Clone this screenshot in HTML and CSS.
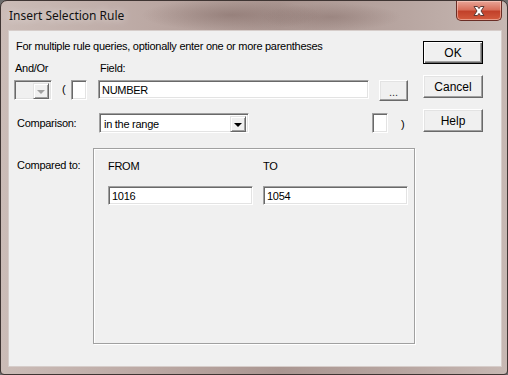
FILE: index.html
```html
<!DOCTYPE html>
<html lang="en">
<head>
  <meta charset="UTF-8">
  <title>Insert Selection Rule</title>
  <link rel="stylesheet" href="styles.css">
</head>
<body>
  <div class="window">
    <div class="titlebar">
      <span class="title">Insert Selection Rule</span>
      <div class="close-btn">
        <svg width="16" height="12" viewBox="0 0 16 12">
          <path d="M3 1.5 L6.5 1.5 L8 3.6 L9.5 1.5 L13 1.5 L10 6 L13 10.5 L9.5 10.5 L8 8.4 L6.5 10.5 L3 10.5 L6 6 Z" fill="#fff" stroke="#5b3b36" stroke-width="1" stroke-linejoin="round"/>
        </svg>
      </div>
    </div>

    <div class="client">
      <div class="main">
        <p class="hint">For multiple rule queries, optionally enter one or more parentheses</p>

        <div class="label-row">
          <span class="andor-label">And/Or</span>
          <span>Field:</span>
        </div>

        <div class="control-row">
          <div class="combo combo-small disabled">
            <span class="combo-text"></span>
            <span class="drop-btn"><i class="arrow"></i></span>
          </div>
          <span class="paren-open">(</span>
          <div class="field paren-box"></div>
          <div class="field field-name">NUMBER</div>
          <button class="btn btn-dots">...</button>
        </div>

        <div class="compare-row">
          <span class="row-label">Comparison:</span>
          <div class="combo combo-compare">
            <span class="combo-text">in the range</span>
            <span class="drop-btn"><i class="arrow"></i></span>
          </div>
          <div class="field paren-box close-box"></div>
          <span class="paren-close">)</span>
        </div>

        <div class="value-row">
          <span class="row-label">Compared to:</span>
          <div class="group">
            <div class="range-col">
              <span>FROM</span>
              <div class="field field-value">1016</div>
            </div>
            <div class="range-col">
              <span>TO</span>
              <div class="field field-value">1054</div>
            </div>
          </div>
        </div>
      </div>

      <div class="side">
        <button class="btn btn-side btn-default">OK</button>
        <button class="btn btn-side">Cancel</button>
        <button class="btn btn-side">Help</button>
      </div>
    </div>
  </div>
</body>
</html>
```

FILE: styles.css
```css
:root {
  --face: #f0f0f0;
  --shadow: #a0a0a0;
  --dark: #696969;
  --light: #e3e3e3;
}

* {
  margin: 0;
  padding: 0;
  box-sizing: border-box;
}

body {
  width: 508px;
  height: 375px;
  overflow: hidden;
  background: #6b6b6b;
  font-family: "Liberation Sans", Arial, sans-serif;
  font-size: 11px;
  letter-spacing: -0.27px;
  color: #000;
}

.window {
  width: 508px;
  height: 375px;
  border: 1px solid #3f3533;
  border-radius: 7px 7px 4px 4px;
  background:
    radial-gradient(ellipse 90px 16px at 230px 14px, rgba(120, 95, 90, 0.45), transparent),
    radial-gradient(ellipse 70px 14px at 330px 16px, rgba(125, 100, 95, 0.4), transparent),
    linear-gradient(90deg, #cbbcb7 0%, #bba8a3 30%, #aa9691 55%, #b8a6a1 80%, #c7b8b3 100%);
  display: flex;
  flex-direction: column;
}

.titlebar {
  height: 29px;
  display: flex;
  align-items: flex-start;
}

.title {
  font-family: "Noto Sans", sans-serif;
  font-size: 12px;
  letter-spacing: 0;
  padding: 6px 0 0 8px;
  color: #111;
  text-shadow: 0 0 8px rgba(255, 255, 255, 0.8);
}

.close-btn {
  margin-left: auto;
  margin-right: 5px;
  width: 46px;
  height: 20px;
  border: 1px solid #6a2d25;
  border-top: none;
  border-radius: 0 0 5px 5px;
  background: linear-gradient(180deg, #e8a597 0%, #d8705c 45%, #c2412a 55%, #d35b3e 100%);
  box-shadow: inset 0 0 0 1px rgba(255, 220, 210, 0.5);
  display: flex;
  align-items: center;
  justify-content: center;
}

.client {
  flex: 1;
  margin: 0 5px 7px 7px;
  background: var(--face);
  border: 1px solid #d6cdca;
  display: flex;
}

.main {
  width: 414px;
}

.hint {
  margin: 9px 0 0 7px;
  line-height: 13px;
}

.label-row {
  display: flex;
  margin-top: 9px;
  line-height: 13px;
}

.andor-label {
  width: 91px;
  padding-left: 6px;
}

.control-row {
  display: flex;
  align-items: flex-start;
  margin-top: 5px;
  padding-left: 5px;
}

.field {
  background: #fff;
  border-top: 1px solid var(--shadow);
  border-left: 1px solid var(--shadow);
  border-right: 1px solid #fff;
  border-bottom: 1px solid #fff;
  box-shadow: inset 1px 1px 0 var(--dark), inset -1px -1px 0 var(--light);
  padding: 3px 0 0 3px;
  line-height: 13px;
}

.combo {
  display: flex;
  height: 20px;
  background: #fff;
  border-top: 1px solid var(--shadow);
  border-left: 1px solid var(--shadow);
  border-right: 1px solid #fff;
  border-bottom: 1px solid #fff;
  box-shadow: inset 1px 1px 0 var(--dark), inset -1px -1px 0 var(--light);
  padding: 2px;
}

.combo.disabled {
  background: var(--face);
}

.combo-text {
  flex: 1;
  padding: 2px 0 0 2px;
  line-height: 13px;
}

.drop-btn {
  width: 16px;
  height: 16px;
  background: var(--face);
  border-top: 1px solid var(--light);
  border-left: 1px solid var(--light);
  border-right: 1px solid var(--dark);
  border-bottom: 1px solid var(--dark);
  box-shadow: inset 1px 1px 0 #fff, inset -1px -1px 0 var(--shadow);
  display: flex;
  align-items: center;
  justify-content: center;
}

.arrow {
  width: 0;
  height: 0;
  border-left: 4px solid transparent;
  border-right: 4px solid transparent;
  border-top: 4px solid #000;
  margin-top: 1px;
}

.disabled .arrow {
  border-top-color: #a0a0a0;
}

.combo-small {
  width: 38px;
}

.paren-open {
  margin: 3px 0 0 10px;
  width: 9px;
}

.paren-box {
  width: 16px;
  height: 20px;
}

.field-name {
  width: 271px;
  height: 19px;
  margin-left: 11px;
}

.btn {
  font-family: "Liberation Sans", Arial, sans-serif;
  font-size: 11px;
  color: #000;
  background: var(--face);
  border-top: 1px solid #fff;
  border-left: 1px solid #fff;
  border-right: 1px solid var(--dark);
  border-bottom: 1px solid var(--dark);
  box-shadow: inset -1px -1px 0 var(--shadow), inset 1px 1px 0 var(--light);
}

.btn-dots {
  width: 29px;
  height: 21px;
  margin-left: 10px;
  padding-top: 2px;
  color: #333;
}

.compare-row {
  display: flex;
  align-items: flex-start;
  margin-top: 12px;
}

.row-label {
  width: 90px;
  padding: 4px 0 0 8px;
  line-height: 13px;
}

.combo-compare {
  width: 150px;
  height: 20px;
}

.close-box {
  margin-left: 123px;
  height: 20px;
}

.paren-close {
  margin: 5px 0 0 13px;
}

.value-row {
  display: flex;
  align-items: flex-start;
  margin-top: 15px;
}

.value-row .row-label {
  width: 84px;
  padding-top: 11px;
}

.group {
  width: 322px;
  height: 196px;
  border: 1px solid var(--shadow);
  box-shadow: inset 1px 1px 0 #fff, 1px 1px 0 #fff;
  display: flex;
  gap: 10px;
  padding: 11px 0 0 14px;
}

.range-col {
  display: flex;
  flex-direction: column;
  gap: 13px;
  line-height: 13px;
}

.field-value {
  width: 145px;
  height: 19px;
}

.side {
  display: flex;
  flex-direction: column;
  gap: 11px;
  padding-top: 10px;
}

.btn-side {
  width: 60px;
  height: 23px;
  font-size: 12px;
  letter-spacing: 0;
}

.btn-default {
  border: 1px solid #000;
  box-shadow: inset 1px 1px 0 #fff, inset -1px -1px 0 var(--dark), inset -2px -2px 0 var(--shadow);
}
```
